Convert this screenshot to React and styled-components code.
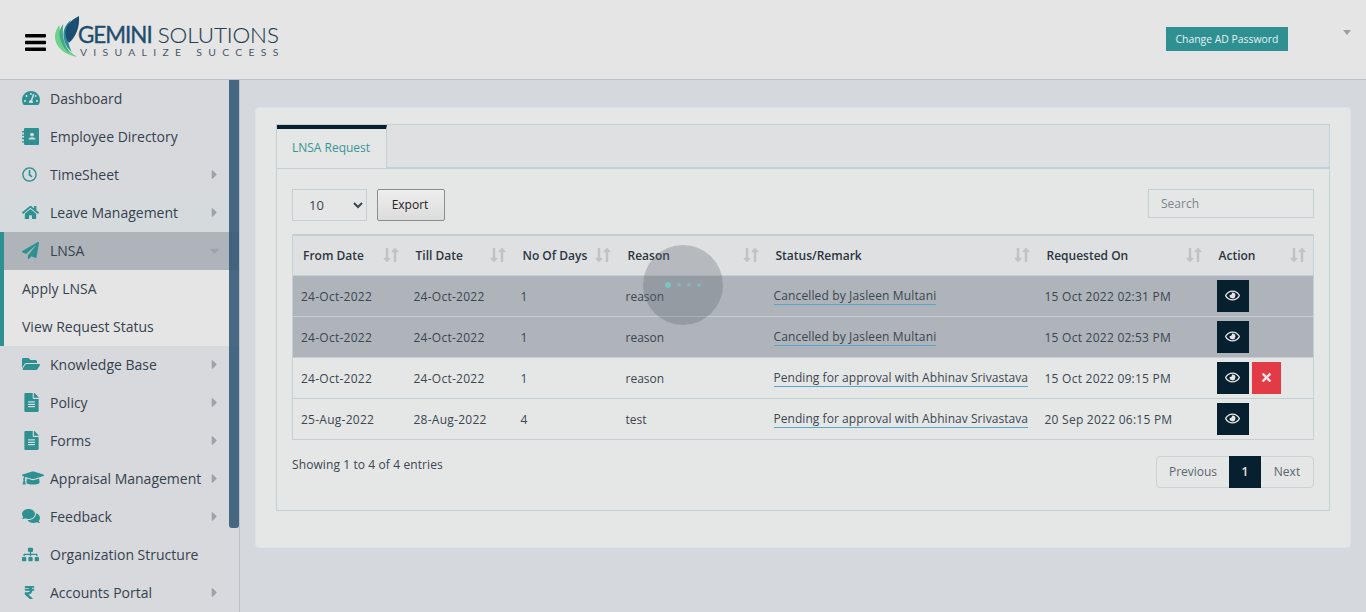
import styled, { createGlobalStyle } from 'styled-components';
import {
    FaTachometerAlt, FaRegClock, FaHome, FaPaperPlane, FaFolderOpen,
    FaFileAlt, FaGraduationCap, FaComments, FaSitemap, FaRupeeSign, FaRegEye, FaTimes,
    FaCaretRight, FaCaretDown, FaLongArrowAltDown, FaLongArrowAltUp,
} from 'react-icons/fa';

// address book with the rings on its left side, the package only has the other style
function DirectoryIcon({ size }) {
    return (
        <svg width={size} height={size} viewBox="0 0 17 17">
            <path d="M3 0h13a1 1 0 0 1 1 1v15a1 1 0 0 1-1 1H3a1 1 0 0 1-1-1V1a1 1 0 0 1 1-1z" fill="currentColor" />
            <path d="M0 3h3.5v1.4H0zM0 6.4h3.5v1.4H0zM0 9.8h3.5v1.4H0zM0 13.2h3.5v1.4H0z" fill="currentColor" />
            <circle cx="10" cy="6.6" r="1.9" fill="#d7d9dd" />
            <path d="M6.5 11.6c0-1.6 1.4-2.3 3.5-2.3s3.5.7 3.5 2.3z" fill="#d7d9dd" />
        </svg>
    );
}

const menu = [
    { label: 'Dashboard', icon: FaTachometerAlt, size: 18 },
    { label: 'Employee Directory', icon: DirectoryIcon, size: 17 },
    { label: 'TimeSheet', icon: FaRegClock, size: 15, arrow: true },
    { label: 'Leave Management', icon: FaHome, size: 17, arrow: true, hovered: true },
    { label: 'LNSA', icon: FaPaperPlane, size: 17, open: true, children: ['Apply LNSA', 'View Request Status'] },
    { label: 'Knowledge Base', icon: FaFolderOpen, size: 18, arrow: true },
    { label: 'Policy', icon: FaFileAlt, size: 19, arrow: true },
    { label: 'Forms', icon: FaFileAlt, size: 19, arrow: true },
    { label: 'Appraisal Management', icon: FaGraduationCap, size: 22, arrow: true },
    { label: 'Feedback', icon: FaComments, size: 18, arrow: true },
    { label: 'Organization Structure', icon: FaSitemap, size: 17 },
    { label: 'Accounts Portal', icon: FaRupeeSign, size: 15, arrow: true },
];

const columns = [
    { title: 'From Date', width: 113 },
    { title: 'Till Date', width: 107 },
    { title: 'No Of Days', width: 105 },
    { title: 'Reason', width: 148 },
    { title: 'Status/Remark', width: 271 },
    { title: 'Requested On', width: 172 },
    { title: 'Action', width: 105 },
];

const rows = [
    { from: '24-Oct-2022', till: '24-Oct-2022', days: 1, reason: 'reason', status: 'Cancelled by Jasleen Multani', on: '15 Oct 2022 02:31 PM', dark: true },
    { from: '24-Oct-2022', till: '24-Oct-2022', days: 1, reason: 'reason', status: 'Cancelled by Jasleen Multani', on: '15 Oct 2022 02:53 PM', dark: true },
    { from: '24-Oct-2022', till: '24-Oct-2022', days: 1, reason: 'reason', status: 'Pending for approval with Abhinav Srivastava', on: '15 Oct 2022 09:15 PM', cancel: true, tight: true },
    { from: '25-Aug-2022', till: '28-Aug-2022', days: 4, reason: 'test', status: 'Pending for approval with Abhinav Srivastava', on: '20 Sep 2022 06:15 PM', tight: true },
];

function App() {
    return (
        <>
            <GlobalStyle />
            <StyledHeader>
                <StyledBrand>
                    <StyledBurger width="21" height="17" viewBox="0 0 21 17">
                        <rect x="0" y="0" width="21" height="3.4" rx="0.8" />
                        <rect x="0" y="6.8" width="21" height="3.4" rx="0.8" />
                        <rect x="0" y="13.6" width="21" height="3.4" rx="0.8" />
                    </StyledBurger>
                    <StyledLogo>
                        <svg width="26" height="42" viewBox="0 0 26 42">
                            <path d="M0 20.7 C 0 28 6 38 22.3 40.7 C 12 36 5 24 4.3 9 C 2 12 0 16 0 20.7 Z" fill="#6fd08a" />
                            <path d="M8.3 8 C 5 12 4 16 4.6 20 C 6 28 10 34 15 37.3 C 9 28 6.5 18 8.3 8 Z" fill="#3fa98d" />
                            <path d="M16 4 C 11 8 8 13 8.6 20 C 9.3 27 12 32 16.7 35.7 C 12.5 28 10.5 14 16 4 Z" fill="#2f8a96" />
                            <path d="M24 0 C 18 3 13 7 11 13 C 9.5 18 11 23 14 26.7 C 20 22 25 12 24 0 Z" fill="#1c4d72" />
                        </svg>
                        <StyledLogoText>
                            <StyledLogoName><b>GEMINI</b> SOLUTIONS</StyledLogoName>
                            <StyledLogoTag>VISUALIZE SUCCESS</StyledLogoTag>
                        </StyledLogoText>
                    </StyledLogo>
                </StyledBrand>
                <StyledHeaderRight>
                    <StyledPasswordButton>Change AD Password</StyledPasswordButton>
                    <StyledUserCaret />
                </StyledHeaderRight>
            </StyledHeader>

            <StyledBody>
                <StyledSidebar>
                    {menu.map((item) => (
                        <div key={item.label}>
                            <StyledMenuItem $open={item.open} $hovered={item.hovered}>
                                <StyledMenuIcon><item.icon size={item.size} /></StyledMenuIcon>
                                <span>{item.label}</span>
                                {item.arrow && <StyledArrow><FaCaretRight /></StyledArrow>}
                                {item.open && <StyledArrow><FaCaretDown /></StyledArrow>}
                            </StyledMenuItem>
                            {item.children && item.children.map((child) => (
                                <StyledSubItem key={child}>{child}</StyledSubItem>
                            ))}
                        </div>
                    ))}
                    <StyledScrollThumb />
                </StyledSidebar>

                <StyledMain>
                    <StyledCard>
                        <StyledTabs>
                            <StyledTabBar>
                                <StyledTab>LNSA Request</StyledTab>
                            </StyledTabBar>
                            <StyledTabContent>
                                <StyledToolbar>
                                    <StyledToolbarLeft>
                                        <StyledSelect defaultValue="10">
                                            <option value="10">10</option>
                                            <option value="25">25</option>
                                        </StyledSelect>
                                        <StyledExport>Export</StyledExport>
                                    </StyledToolbarLeft>
                                    <StyledSearch placeholder="Search" />
                                </StyledToolbar>

                                <StyledTable>
                                    <colgroup>
                                        {columns.map((c) => <col key={c.title} width={c.width} />)}
                                    </colgroup>
                                    <thead>
                                        <tr>
                                            {columns.map((c) => (
                                                <StyledTh key={c.title}>
                                                    <StyledThInner>
                                                        {c.title}
                                                        <StyledSort>
                                                            <FaLongArrowAltDown />
                                                            <FaLongArrowAltUp />
                                                        </StyledSort>
                                                    </StyledThInner>
                                                </StyledTh>
                                            ))}
                                        </tr>
                                    </thead>
                                    <tbody>
                                        {rows.map((r, i) => (
                                            <StyledRow key={i} $dark={r.dark}>
                                                <StyledDateCell>{r.from}</StyledDateCell>
                                                <StyledDateCell>{r.till}</StyledDateCell>
                                                <td>{r.days}</td>
                                                <td>{r.reason}</td>
                                                <StyledStatusCell><StyledStatus $tight={r.tight}>{r.status}</StyledStatus></StyledStatusCell>
                                                <StyledDateCell>{r.on}</StyledDateCell>
                                                <StyledActionCell>
                                                    <StyledActions>
                                                        <StyledViewButton><FaRegEye /></StyledViewButton>
                                                        {r.cancel && <StyledCancelButton><FaTimes /></StyledCancelButton>}
                                                    </StyledActions>
                                                </StyledActionCell>
                                            </StyledRow>
                                        ))}
                                    </tbody>
                                </StyledTable>

                                <StyledFooter>
                                    <StyledInfo>Showing 1 to 4 of 4 entries</StyledInfo>
                                    <StyledPager>
                                        <StyledPage $width={72}>Previous</StyledPage>
                                        <StyledPage $width={32} $active>1</StyledPage>
                                        <StyledPage $width={52}>Next</StyledPage>
                                    </StyledPager>
                                </StyledFooter>
                            </StyledTabContent>
                        </StyledTabs>
                    </StyledCard>
                </StyledMain>
            </StyledBody>

            <StyledLoader>
                <StyledDot $big />
                <StyledDot />
                <StyledDot />
                <StyledDot />
            </StyledLoader>
        </>
    );
}

export default App;

const GlobalStyle = createGlobalStyle`
    html, body {
        margin: 0;
        height: 100%;
        overflow: hidden;
    }
    body {
        background-color: #d5d8dc;
        color: #3a4650;
        font-family: "Open Sans", "Liberation Sans", sans-serif;
        font-size: 13px;
    }
    * {
        box-sizing: border-box;
    }
`;

const StyledHeader = styled.header`
    height: 80px;
    background-color: #e5e5e5;
    border-bottom: 1px solid #bac3cb;
    display: flex;
    justify-content: space-between;
    align-items: flex-start;
    padding-left: 25px;
`;

const StyledBrand = styled.div`
    display: flex;
    align-items: flex-start;
`;

const StyledBurger = styled.svg`
    margin-top: 34px;
    fill: #000;
`;

const StyledLogo = styled.div`
    display: flex;
    align-items: flex-start;
    margin: 16px 0 0 9px;
`;

const StyledLogoText = styled.div`
    display: flex;
    flex-direction: column;
    margin-left: -3px;
`;

const StyledLogoName = styled.div`
    font-family: "Lato", sans-serif;
    font-weight: 300;
    font-size: 22.4px;
    line-height: 24px;
    margin-top: 7px;
    letter-spacing: -0.1px;
    color: #243f50;
    white-space: nowrap;
    -webkit-text-stroke: 0.15px #243f50;
    b {
        font-weight: 400;
        letter-spacing: -1px;
        color: #1f4d6e;
        -webkit-text-stroke: 0.35px #1f4d6e;
    }
`;

const StyledLogoTag = styled.div`
    font-family: "Lato", sans-serif;
    font-size: 10.4px;
    line-height: 11px;
    letter-spacing: 6.3px;
    color: #45596a;
    white-space: nowrap;
    margin: 0 0 0 2px;
`;

const StyledHeaderRight = styled.div`
    display: flex;
    align-items: flex-start;
`;

const StyledPasswordButton = styled.button`
    width: 122px;
    height: 24px;
    margin-top: 27px;
    padding: 0 0 1px;
    border: none;
    background-color: #2f9091;
    color: #e6f2f2;
    font-family: inherit;
    font-size: 10.4px;
`;

const StyledUserCaret = styled.div`
    width: 0;
    height: 0;
    margin: 30px 15px 0 55px;
    border-left: 4px solid transparent;
    border-right: 4px solid transparent;
    border-top: 5px solid #9a9fa6;
`;

const StyledBody = styled.div`
    display: flex;
    height: 532px;
`;

const StyledSidebar = styled.nav`
    position: relative;
    width: 240px;
    flex-shrink: 0;
    background-color: #d7d9dd;
    border-right: 1px solid #bac3cb;
    overflow: hidden;
    font-size: 14px;
`;

const StyledMenuItem = styled.div`
    height: 38px;
    display: flex;
    align-items: center;
    padding-left: ${(props) => (props.$open ? '18px' : '22px')};
    padding-right: 22px;
    padding-bottom: 2px;
    color: #36424e;
    background-color: ${(props) => (props.$open ? '#aeb4ba' : props.$hovered ? '#d5dadd' : 'transparent')};
    border-left: ${(props) => (props.$open ? '4px solid #2f9091' : 'none')};
    white-space: nowrap;
`;

const StyledMenuIcon = styled.span`
    width: 28px;
    flex-shrink: 0;
    display: flex;
    align-items: center;
    color: #2f9091;
`;

const StyledArrow = styled.span`
    margin-left: auto;
    margin-right: -5px;
    flex-shrink: 0;
    display: flex;
    color: #9da3aa;
    font-size: 15px;
`;

const StyledSubItem = styled.div`
    height: 38px;
    display: flex;
    align-items: center;
    padding: 0 0 2px 18px;
    background-color: #e5e5e5;
    border-left: 4px solid #2f9091;
    color: #36424e;
`;

const StyledScrollThumb = styled.div`
    position: absolute;
    top: 0;
    right: 0;
    width: 10px;
    height: 448px;
    background-color: rgba(54, 90, 120, 0.9);
    border-radius: 0 0 3px 3px;
`;

const StyledMain = styled.main`
    flex: 1;
    min-width: 0;
    padding: 27px 15px 0;
`;

const StyledCard = styled.div`
    height: 441px;
    padding: 16px 20px 0;
    background-color: #e5e6e6;
    border: 1px solid #dfe2e4;
    border-radius: 4px;
`;

const StyledTabs = styled.div`
    height: 387px;
    border: 1px solid #c4d0d6;
    display: flex;
    flex-direction: column;
`;

const StyledTabBar = styled.div`
    height: 44px;
    background-color: #dfe0e2;
    border-bottom: 2px solid #c4d0d6;
    display: flex;
`;

const StyledTab = styled.div`
    width: 110px;
    height: 43px;
    display: flex;
    align-items: center;
    justify-content: center;
    padding: 0 1px 2px 0;
    background-color: #e5e6e6;
    border-top: 4px solid #06202f;
    border-right: 1px solid #c4d0d6;
    color: #3a9596;
    font-size: 12px;
`;

const StyledTabContent = styled.div`
    flex: 1;
    padding: 20px 15px 0;
`;

const StyledToolbar = styled.div`
    display: flex;
    justify-content: space-between;
    align-items: flex-start;
    margin-bottom: 13px;
`;

const StyledToolbarLeft = styled.div`
    display: flex;
    gap: 10px;
`;

const StyledSelect = styled.select`
    width: 75px;
    height: 32px;
    padding-left: 12px;
    background-color: #e5e6e6;
    border: 1px solid #c4d0d6;
    border-radius: 0;
    color: #3a4650;
    font-family: inherit;
    font-size: 13px;
`;

const StyledExport = styled.button`
    width: 68px;
    height: 32px;
    padding: 0 2px 2px 0;
    background: linear-gradient(#eeeeee, #dcdcdc);
    border: 1px solid #8a8d8f;
    border-radius: 2px;
    color: #222;
    font-family: inherit;
    font-size: 12px;
`;

const StyledSearch = styled.input`
    width: 166px;
    height: 29px;
    padding: 0 12px;
    background-color: #e5e6e6;
    border: 1px solid #c4d0d6;
    font-family: inherit;
    font-size: 12px;
    &::placeholder {
        color: #7c858c;
    }
`;

const StyledTable = styled.table`
    width: 1022px;
    table-layout: fixed;
    border-collapse: collapse;
    border: 1px solid #c4d0d6;
    border-top: 2px solid #c4d0d6;
    font-size: 12px;
    td {
        height: 41px;
        padding: 2px 8px 0;
        border-top: 1px solid #c4d0d6;
        white-space: nowrap;
    }
`;

const StyledTh = styled.th`
    height: 40px;
    padding: 0 2px 0 10px;
    background-color: #dfe0e2;
    color: #2c3640;
    font-size: 12px;
    font-weight: 600;
    text-align: left;
`;

const StyledThInner = styled.div`
    display: flex;
    align-items: center;
    justify-content: space-between;
`;

const StyledSort = styled.span`
    display: flex;
    color: #bfc3c8;
    margin-right: 5px;
    svg {
        width: 8px;
        height: 16px;
    }
`;

const StyledRow = styled.tr`
    background-color: ${(props) => (props.$dark ? '#aeb4ba' : 'transparent')};
    color: #3a4650;
`;

const StyledDateCell = styled.td`
    letter-spacing: 0.25px;
`;

const StyledStatusCell = styled.td`
    && {
        padding-top: 0;
    }
`;

const StyledActionCell = styled.td`
    && {
        padding-top: 0;
    }
`;

const StyledStatus = styled.span`
    display: inline-block;
    border-bottom: 1px solid #5aa5cf;
    line-height: 17px;
    letter-spacing: ${(props) => (props.$tight ? '0.05px' : '0.14px')};
`;

const StyledActions = styled.div`
    display: flex;
    gap: 3px;
`;

const StyledViewButton = styled.span`
    width: 32px;
    height: 32px;
    display: flex;
    align-items: center;
    justify-content: center;
    background-color: #06202f;
    color: #e6e6e6;
    font-size: 15px;
`;

const StyledCancelButton = styled.span`
    width: 29px;
    height: 32px;
    display: flex;
    align-items: center;
    justify-content: center;
    background-color: #e33b45;
    color: #e6e6e6;
    font-size: 13px;
`;

const StyledFooter = styled.div`
    display: flex;
    justify-content: space-between;
    align-items: flex-start;
    margin-top: 16px;
`;

const StyledInfo = styled.div`
    font-size: 12px;
    line-height: 18px;
    letter-spacing: 0.1px;
`;

const StyledPager = styled.div`
    display: flex;
    height: 32px;
    border: 1px solid #c9d2d8;
    border-radius: 4px;
`;

const StyledPage = styled.span`
    width: ${(props) => props.$width}px;
    display: flex;
    align-items: center;
    justify-content: center;
    height: ${(props) => (props.$active ? '32px' : '30px')};
    margin-top: ${(props) => (props.$active ? '-1px' : '0')};
    background-color: ${(props) => (props.$active ? '#06202f' : 'transparent')};
    color: ${(props) => (props.$active ? '#e6e6e6' : '#5c6770')};
    font-size: 12px;
    font-weight: ${(props) => (props.$active ? 600 : 400)};
`;

const StyledLoader = styled.div`
    position: absolute;
    left: 643px;
    top: 245px;
    width: 80px;
    height: 80px;
    border-radius: 50%;
    background-color: rgba(90, 98, 108, 0.3);
    display: flex;
    align-items: center;
    justify-content: center;
    gap: 6.3px;
`;

const StyledDot = styled.span`
    width: ${(props) => (props.$big ? '6px' : '4px')};
    height: ${(props) => (props.$big ? '6px' : '4px')};
    border-radius: 50%;
    background-color: ${(props) => (props.$big ? '#79c4c8' : '#86b5b8')};
`;
